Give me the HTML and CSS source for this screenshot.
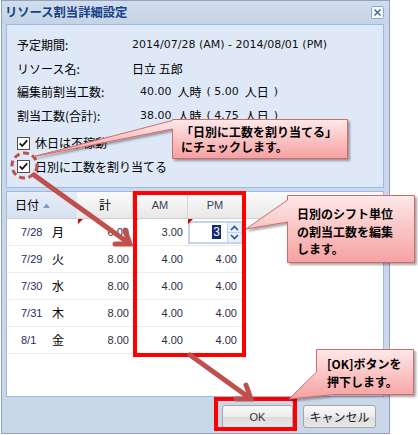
FILE: index.html
```html
<!DOCTYPE html>
<html lang="ja">
<head>
<meta charset="utf-8">
<title>リソース割当詳細設定</title>
<link rel="stylesheet" href="styles.css">
</head>
<body>
<div class="dialog">
  <div class="titlebar">
    <span class="title">リソース割当詳細設定</span>
    <span class="close"><svg width="13" height="13" viewBox="0 0 13 13"><rect x="0.5" y="0.5" width="12" height="12" rx="1" fill="#f3f6fb" stroke="#8ea9cf"/><path d="M3.5 3.5 L9.5 9.5 M9.5 3.5 L3.5 9.5" stroke="#3d5f95" stroke-width="1.3"/></svg></span>
  </div>
  <div class="form">
    <div class="frow"><span class="lbl">予定期間:</span><span class="val num">2014/07/28 (AM) - 2014/08/01 (PM)</span></div>
    <div class="frow short"><span class="lbl">リソース名:</span><span class="val">日立 五郎</span></div>
    <div class="frow"><span class="lbl">編集前割当工数:</span><span class="val ind"><span class="num">40.00</span><span class="unit">人時</span><span class="num par">( 5.00</span><span class="unit">人日</span><span class="num par">)</span></span></div>
    <div class="frow"><span class="lbl">割当工数(合計):</span><span class="val ind"><span class="num">38.00</span><span class="unit">人時</span><span class="num par">( 4.75</span><span class="unit">人日</span><span class="num par">)</span></span></div>
    <div class="chkrow first"><svg class="cb" width="13" height="13" viewBox="0 0 13 13"><rect x="0.5" y="0.5" width="12" height="12" fill="#fff" stroke="#4d4d4d"/><path d="M2.8 6.4 L5.2 9 L10.2 3.4" fill="none" stroke="#111" stroke-width="1.8"/></svg><span>休日は不稼動</span></div>
    <div class="chkrow short"><svg class="cb" width="13" height="13" viewBox="0 0 13 13"><rect x="0.5" y="0.5" width="12" height="12" fill="#fff" stroke="#4d4d4d"/><path d="M2.8 6.4 L5.2 9 L10.2 3.4" fill="none" stroke="#111" stroke-width="1.8"/></svg><span>日別に工数を割り当てる</span></div>
  </div>
  <div class="grid">
    <div class="ghead">
      <div class="hc c-date sorted">日付<svg class="sort" width="7" height="5" viewBox="0 0 7 5"><polygon points="0,5 3.5,0.5 7,5" fill="#7f9cc8"/></svg></div>
      <div class="hc c-sum">計</div>
      <div class="hc c-am lat">AM</div>
      <div class="hc c-pm lat">PM</div>
      <div class="hc c-fill"></div>
    </div>
    <div class="grow">
      <div class="cell c-date"><span class="d">7/28</span><span class="w">月</span></div>
      <div class="cell c-sum dirty">6.00</div>
      <div class="cell c-am dirty">3.00</div>
      <div class="cell c-pm dirty editing">
        <div class="editor">
          <div class="field"><span class="sel">3</span></div>
          <div class="spin"><svg width="13" height="19" viewBox="0 0 13 19"><rect x="0" y="0" width="13" height="9" fill="#e9f0fa"/><rect x="0" y="10" width="13" height="9" fill="#e9f0fa"/><path d="M3 7 L6.5 3.5 L10 7 M3 12 L6.5 15.5 L10 12" fill="none" stroke="#2a558f" stroke-width="1.6"/></svg></div>
        </div>
      </div>
    </div>
    <div class="grow">
      <div class="cell c-date"><span class="d">7/29</span><span class="w">火</span></div>
      <div class="cell c-sum">8.00</div>
      <div class="cell c-am">4.00</div>
      <div class="cell c-pm">4.00</div>
    </div>
    <div class="grow">
      <div class="cell c-date"><span class="d">7/30</span><span class="w">水</span></div>
      <div class="cell c-sum">8.00</div>
      <div class="cell c-am">4.00</div>
      <div class="cell c-pm">4.00</div>
    </div>
    <div class="grow">
      <div class="cell c-date"><span class="d">7/31</span><span class="w">木</span></div>
      <div class="cell c-sum">8.00</div>
      <div class="cell c-am">4.00</div>
      <div class="cell c-pm">4.00</div>
    </div>
    <div class="grow">
      <div class="cell c-date"><span class="d">8/1</span><span class="w">金</span></div>
      <div class="cell c-sum">8.00</div>
      <div class="cell c-am">4.00</div>
      <div class="cell c-pm">4.00</div>
    </div>
  </div>
  <div class="footer">
    <button class="btn ok">OK</button>
    <button class="btn cancel">キャンセル</button>
  </div>
</div>

<div class="overlay">
  <div class="redbox rb-grid"></div>
  <div class="redbox rb-ok"></div>
  <svg class="marks" width="418" height="435" viewBox="0 0 418 435">
    <defs>
      <linearGradient id="pk" x1="0" y1="0" x2="0" y2="1">
        <stop offset="0" stop-color="#fee9e9"/>
        <stop offset="1" stop-color="#f6a0a0"/>
      </linearGradient>
      <filter id="sh" x="-10%" y="-10%" width="130%" height="140%">
        <feDropShadow dx="2" dy="2" stdDeviation="1.2" flood-color="#000" flood-opacity="0.35"/>
      </filter>
    </defs>
    <circle cx="24.5" cy="165.5" r="12.5" fill="none" stroke="#c0504d" stroke-width="3" stroke-dasharray="6 3.5"/>
    <g stroke="#c0504d" stroke-width="5" fill="none" stroke-linecap="round" stroke-linejoin="miter">
      <line x1="34" y1="175" x2="128" y2="242.5"/>
      <polyline points="125,230 130,244 115,244"/>
      <line x1="190" y1="355" x2="249" y2="397.5"/>
      <polyline points="246,385 251,399 236,399"/>
    </g>
    <g filter="url(#sh)" fill="url(#pk)" stroke="#d06a6a" stroke-width="1">
      <path d="M172.5,119.5 H347.5 V158.5 H172.5 V129 L34,156.5 L172.5,120.5 Z"/>
      <path d="M287.5,195.5 H414.5 V262.5 H287.5 V222 L246,229 L287.5,200 Z"/>
      <path d="M316.5,349.5 H413.5 V394.5 H334 L289,399 L316.5,372 Z"/>
    </g>
  </svg>
  <div class="note note-a">「日別に工数を割り当てる」<br>にチェックします。</div>
  <div class="note note-b">日別のシフト単位<br>の割当工数を編集<br>します。</div>
  <div class="note note-c">[OK]ボタンを<br>押下します。</div>
</div>
</body>
</html>
```

FILE: styles.css
```css
* { box-sizing: border-box; }

body {
  margin: 0;
  width: 418px;
  height: 435px;
  position: relative;
  overflow: hidden;
  background: #fff;
  font-family: "Noto Sans CJK JP", sans-serif;
  font-size: 12px;
  color: #000;
}

.dialog {
  margin-left: 1px;
  width: 389px;
  height: 434px;
  border: 1px solid #8ba3c6;
  background: #cad7e8;
  display: flex;
  flex-direction: column;
}

.titlebar {
  height: 23px;
  flex: none;
  display: flex;
  align-items: center;
  justify-content: space-between;
  padding: 0 5px 0 3px;
  background: linear-gradient(#d2ddeb, #c5d3e5);
}

.title {
  font-weight: 700;
  font-size: 12.3px;
  color: #15428b;
  line-height: 23px;
}

.close { display: flex; width: 13px; height: 13px; }

.form {
  flex: none;
  margin-left: 4px;
  width: 378px;
  height: 164px;
  border: 1px solid #99bbe8;
  background: #dfe8f6;
  padding: 8px 0 0 10px;
}

.frow {
  display: flex;
  align-items: center;
  height: 24px;
  line-height: 16px;
}
.frow.short { height: 23px; }

.lbl { width: 115px; flex: none; }
.val { display: flex; align-items: center; }
.num { font-family: "DejaVu Sans", sans-serif; font-size: 11px; color: #111; }
.ind { padding-left: 8px; }
.unit { margin-left: 6px; }
.par { margin-left: 5px; }

.chkrow {
  display: flex;
  align-items: center;
  gap: 5px;
  height: 24px;
  line-height: 16px;
}
.chkrow.first { margin-top: 3px; }
.chkrow.short { height: 23px; }
.cb { flex: none; display: block; }

.grid {
  flex: none;
  margin: 3px 0 0 4px;
  width: 378px;
  height: 206px;
  border: 1px solid #99bbe8;
  background: #fff;
}

.ghead {
  display: flex;
  height: 27px;
  border-bottom: 1px solid #d0d0d0;
  background: linear-gradient(#fbfbfb, #e8e8e8);
}

.hc {
  display: flex;
  align-items: center;
  justify-content: center;
  height: 100%;
  border-right: 1px solid #d5d5d5;
  color: #000;
  line-height: 16px;
}
.hc.lat { font-family: "Liberation Sans", sans-serif; font-size: 11px; color: #3a3f55; }
.hc.sorted {
  justify-content: flex-start;
  padding-left: 8px;
  background: linear-gradient(#e8eef8, #d6e1f1);
  border-right-color: #f3f6fb;
}
.sort { margin-left: 4px; margin-top: 1px; }
.hc.c-fill { flex: 1; border-right: none; }

.c-date { width: 71px; flex: none; }
.c-sum, .c-am, .c-pm { width: 55px; flex: none; }

.grow {
  display: flex;
  width: 236px;
  height: 27px;
  border-bottom: 1px solid #ececec;
}

.cell {
  position: relative;
  display: flex;
  align-items: center;
  justify-content: flex-end;
  font-family: "Liberation Sans", sans-serif;
  font-size: 11px;
  color: #2b2f45;
}
.cell.c-sum { padding-right: 4px; }
.cell.c-am { padding-right: 5px; }
.cell.c-pm { padding-right: 6px; }
.cell.c-date { justify-content: flex-start; padding-left: 14px; }
.d { width: 31px; color: #2a2d60; }
.w { font-family: "Noto Sans CJK JP", sans-serif; font-size: 12px; color: #000; line-height: 16px; }

.dirty::before {
  content: "";
  position: absolute;
  left: 0;
  top: 0;
  border-top: 5px solid #d40000;
  border-right: 5px solid transparent;
}

.cell.editing { padding: 0; justify-content: flex-start; }
.editor {
  display: flex;
  gap: 1px;
  width: 54px;
  height: 23px;
  padding: 2px 1px 2px 2px;
  background: #c3d5ee;
}
.field {
  width: 37px;
  background: #fff;
  display: flex;
  align-items: center;
  justify-content: flex-end;
  padding-right: 6px;
  font-size: 12px;
}
.sel { background: #0f2a6e; color: #fff; padding: 0 1px; line-height: 14px; }
.spin { display: flex; }

.footer {
  flex: 1;
  display: flex;
  justify-content: flex-end;
  align-items: flex-start;
  gap: 10px;
  padding: 8px 13px 0 0;
}

.btn {
  height: 23px;
  padding: 0;
  border: 1px solid #a6a6a6;
  border-radius: 3px;
  background: linear-gradient(#f8f8f8, #ececec 50%, #dcdcdc 51%, #e8e8e8);
  font-family: "Noto Sans CJK JP", sans-serif;
  font-size: 12px;
  color: #222;
}
.btn.ok { width: 71px; font-family: "Liberation Sans", sans-serif; font-size: 11px; color: #333; }
.btn.cancel { width: 73px; }

.overlay {
  position: absolute;
  left: 0;
  top: 0;
  width: 418px;
  height: 435px;
  pointer-events: none;
}
.marks { position: absolute; left: 0; top: 0; }

.redbox { position: absolute; border: 4px solid #ff0000; }
.rb-grid { left: 133px; top: 191px; width: 113px; height: 166px; }
.rb-ok { left: 214px; top: 397px; width: 83px; height: 34px; }

.note {
  position: absolute;
  font-weight: 700;
  font-size: 12px;
  color: #000;
  white-space: nowrap;
}
.note-a { left: 181px; top: 119px; padding-top: 6px; line-height: 14.5px; }
.note-b { left: 297px; top: 195px; padding-top: 10px; line-height: 17.5px; }
.note-c { left: 327px; top: 349px; padding-top: 6px; line-height: 17.5px; }
```
